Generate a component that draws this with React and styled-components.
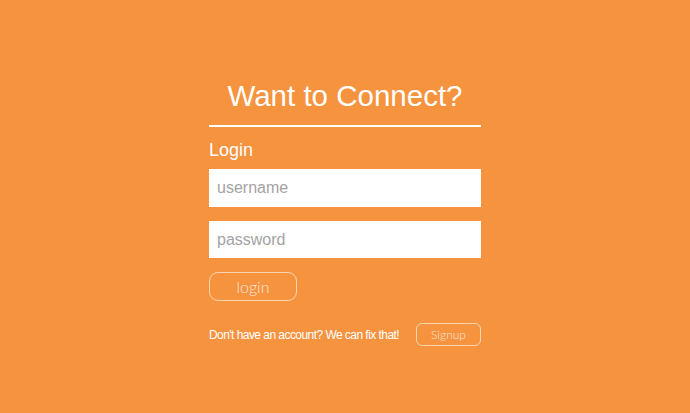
import React from "react";
import styled, { createGlobalStyle } from "styled-components";

const Global = createGlobalStyle`
  html, body {
    margin: 0;
    padding: 0;
    background: #f5933f;
    height: 100%;
  }
  body {
    font-family: "Liberation Sans", Arial, sans-serif;
  }
`;

const Page = styled.div`
  min-height: 413px;
  background: #f5933f;
  display: flex;
  justify-content: center;
  padding-top: 79px;
  box-sizing: border-box;
`;

const Panel = styled.div`
  width: 272px;
  display: flex;
  flex-direction: column;
`;

const Title = styled.h1`
  margin: 0;
  font-size: 29.5px;
  font-weight: normal;
  line-height: 34px;
  color: #fff;
  text-align: center;
`;

const Rule = styled.div`
  height: 2px;
  background: #fff;
  margin-top: 12px;
`;

const Label = styled.div`
  margin-top: 13px;
  font-size: 18px;
  line-height: 20px;
  color: #fff;
`;

const Input = styled.input`
  box-sizing: border-box;
  width: 100%;
  height: ${(p) => p.$h}px;
  margin-top: ${(p) => p.$top}px;
  border: none;
  outline: none;
  padding: 0 8px;
  font-family: "Liberation Sans", Arial, sans-serif;
  font-size: 16px;
  color: #555;
  background: #fff;
  &::placeholder {
    color: #a3a3a3;
  }
`;

const GhostButton = styled.button`
  box-sizing: border-box;
  width: ${(p) => p.$w}px;
  height: ${(p) => p.$h}px;
  border: 1px solid rgba(255, 255, 255, 0.6);
  border-radius: ${(p) => p.$r}px;
  background: transparent;
  color: rgba(255, 255, 255, 0.8);
  font-family: Lato, "Open Sans", sans-serif;
  font-weight: 300;
  font-size: ${(p) => p.$fs}px;
  padding: 0;
  cursor: pointer;
`;

const LoginRow = styled.div`
  margin-top: 14px;
  display: flex;
`;

const Footer = styled.div`
  margin-top: 22px;
  display: flex;
  align-items: center;
  justify-content: space-between;
`;

const Note = styled.span`
  font-size: 12px;
  letter-spacing: -0.55px;
  white-space: nowrap;
  color: #fff;
`;

export default function App() {
  return (
    <>
      <Global />
      <Page>
        <Panel>
          <Title>Want to Connect?</Title>
          <Rule />
          <Label>Login</Label>
          <Input $h={38} $top={9} placeholder="username" />
          <Input $h={37} $top={14} type="password" placeholder="password" />
          <LoginRow>
            <GhostButton $w={88} $h={29} $r={9} $fs={16}>
              login
            </GhostButton>
          </LoginRow>
          <Footer>
            <Note>Don't have an account? We can fix that!</Note>
            <GhostButton $w={65} $h={23} $r={6} $fs={12}>
              Signup
            </GhostButton>
          </Footer>
        </Panel>
      </Page>
    </>
  );
}
